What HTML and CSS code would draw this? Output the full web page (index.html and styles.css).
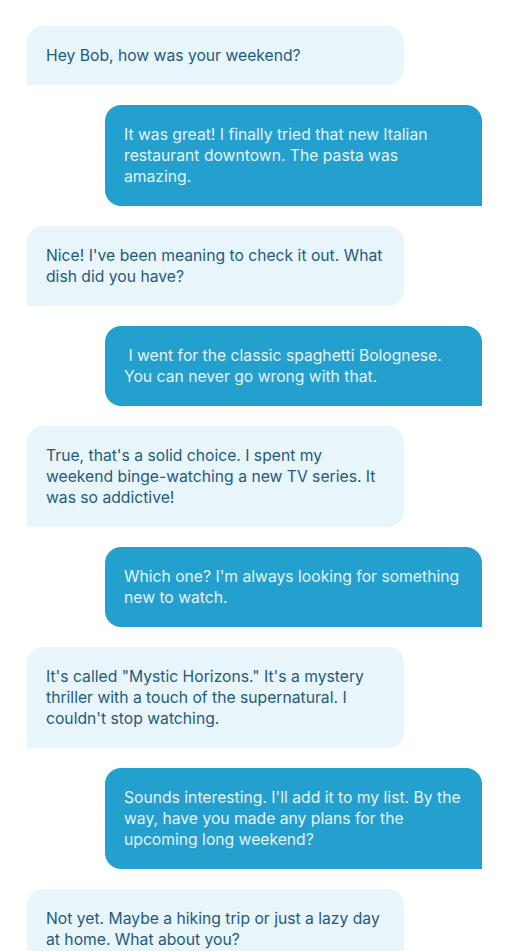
FILE: index.html
```html
<!DOCTYPE html>
<html lang="en">
<head>
<meta charset="utf-8">
<link rel="stylesheet" href="styles.css">
</head>
<body>
<div class="chat">
  <div class="msg in">Hey Bob, how was your weekend?</div>
  <div class="msg out">It was great! I finally tried that new Italian restaurant downtown. The pasta was amazing.</div>
  <div class="msg in">Nice! I've been meaning to check it out. What dish did you have?</div>
  <div class="msg out">&nbsp;I went for the classic spaghetti Bolognese. You can never go wrong with that.</div>
  <div class="msg in">True, that's a solid choice. I spent my weekend binge-watching a new TV series. It was so addictive!</div>
  <div class="msg out">Which one? I'm always looking for something new to watch.</div>
  <div class="msg in">It's called "Mystic Horizons." It's a mystery thriller with a touch of the supernatural. I couldn't stop watching.</div>
  <div class="msg out">Sounds interesting. I'll add it to my list. By the way, have you made any plans for the upcoming long weekend?</div>
  <div class="msg in">Not yet. Maybe a hiking trip or just a lazy day at home. What about you?</div>
</div>
</body>
</html>
```
FILE: styles.css
```css
html, body {
  margin: 0;
  padding: 0;
  background: #ffffff;
}
body {
  font-family: Inter, "Noto Sans", sans-serif;
  overflow: hidden;
}
.chat {
  display: flex;
  flex-direction: column;
  gap: 20px;
  padding: 26px 26px 0 27px;
}
.msg {
  box-sizing: border-box;
  width: 377px;
  padding: 19px 19px;
  font-size: 15.7px;
  line-height: 21px;
}
.in {
  align-self: flex-start;
  background: #e8f5fb;
  color: #1f5b7a;
  border-radius: 16px 16px 16px 0;
}
.out {
  align-self: flex-end;
  background: #23a0cd;
  color: #e3f3fa;
  border-radius: 16px 16px 0 16px;
}
```
